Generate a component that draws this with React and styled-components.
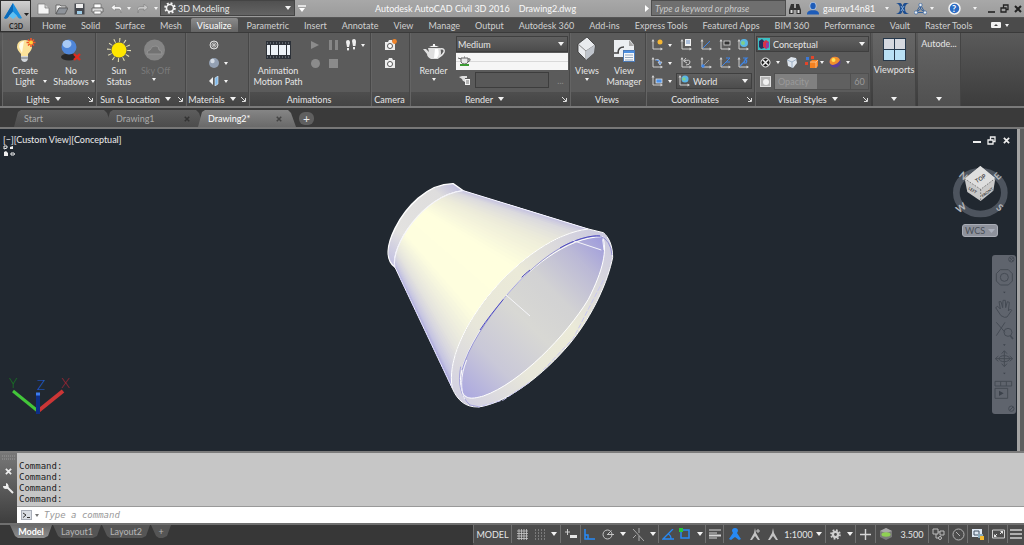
import styled, { createGlobalStyle } from "styled-components"

const ribbonTabs = [
    "Home", "Solid", "Surface", "Mesh", "Visualize", "Parametric", "Insert", "Annotate", "View",
    "Manage", "Output", "Autodesk 360", "Add-ins", "Express Tools", "Featured Apps", "BIM 360",
    "Performance", "Vault", "Raster Tools",
]

export default function App(){
    return(
        <Window>
            <GlobalStyle />
            <Header />
            <Ribbon />
            <DocumentTabs />
            <Viewport />
            <CommandLine />
            <Footer />
        </Window>
    )
}

function Header(){
    return(
        <Top>
            <AppButton aria-label="Application menu">
                <Svg w={29} h={30}>
                    <path d="M12 2 L3 17 Q6 19 8 15 L12 11 L16 15 Q18 19 21 17 Z" fill="#1b8fe0" />
                    <path d="M12 2 L3 17 Q6 19 8 15 L12 10 Z" fill="#0a68b8" />
                    <path d="M8 15 L12 11 L16 15 L12 18 Z" fill="#5cc0f5" />
                    <path d="M23 12h5l-2.500 3z" fill="#222" />
                    <text x="8" y="28" fontSize="7" fontWeight="700" fill="#222">C3D</text>
                </Svg>
            </AppButton>
            <TitleBar>
                <QuickAccess>
                    <Tool $w={18} aria-label="New"><NewIcon /></Tool>
                    <Tool $w={18} aria-label="Open"><OpenIcon /></Tool>
                    <Tool $w={18} aria-label="Save"><SaveIcon /></Tool>
                    <Tool $w={18} aria-label="Plot"><PrintIcon /></Tool>
                    <Tool $w={20} aria-label="Undo"><UndoIcon color="#f4f4f4" /></Tool>
                    <Tool $w={6} aria-label="Undo list"><Caret /></Tool>
                    <Tool $w={20} aria-label="Redo"><UndoIcon color="#c6c6c6" flip /></Tool>
                    <Tool $w={8} aria-label="Redo list"><Caret /></Tool>
                </QuickAccess>
                <Workspace>
                    <GearIcon size={12} color="#f2f2f2" />
                    <select aria-label="Workspace"><option>3D Modeling</option></select>
                    <Caret $big />
                </Workspace>
                <Tool $w={13} aria-label="Customize quick access">
                    <Svg w={8} h={8}><path d="M0 1h8" stroke="#fff" strokeWidth="1.4" /><path d="M1 3h6L4 7z" fill="#fff" /></Svg>
                </Tool>
                <Title>
                    <span>Autodesk AutoCAD Civil 3D 2016</span>
                    <span>Drawing2.dwg</span>
                </Title>
                <Tool $w={8} aria-label="Collapse search">
                    <Svg w={4} h={7}><path d="M0 0l4 3.500-4 3.500z" fill="#fff" /></Svg>
                </Tool>
                <Search type="text" aria-label="Search" placeholder="Type a keyword or phrase" />
                <Tool $w={18} aria-label="Find"><BinocularsIcon /></Tool>
                <User>
                    <Svg w={12} h={13}>
                        <ellipse cx="6" cy="4" rx="3.200" ry="3.800" fill="#1e5cb8" stroke="#dfe8f5" strokeWidth=".6" />
                        <path d="M0 12.500c0-3 2-3.800 4-4.200h4c2 .4 4 1.200 4 4.200z" fill="#1e5cb8" />
                    </Svg>
                    gaurav14n81
                </User>
                <Tool $w={10} aria-label="Account menu"><Caret /></Tool>
                <Tool $w={20} aria-label="Exchange apps">
                    <Svg w={13} h={11}>
                        <path d="M0 0h4q2 0 2.500 4Q7 0 9 0h4q-4 1-4 5.500T13 11H9q-2 0-2.500-4Q6 11 4 11H0q4-1 4-5.500T0 0z" fill="#1d4d8f" />
                        <path d="M5 3l1.500 2.500L5 8M8 3L6.500 5.500 8 8" stroke="#9cc4f0" strokeWidth=".8" fill="none" />
                    </Svg>
                </Tool>
                <Tool $w={16} aria-label="Autodesk 360">
                    <Svg w={13} h={12}>
                        <path d="M6.500 2L2 9.500h9zM6.500 2v4M6.500 6L2 9.500M6.500 6l4.500 3.500" stroke="#35619b" fill="none" />
                        <circle cx="6.500" cy="2" r="1.700" fill="#e9eef5" stroke="#35619b" strokeWidth=".7" />
                        <circle cx="2" cy="9.500" r="1.700" fill="#e9eef5" stroke="#35619b" strokeWidth=".7" />
                        <circle cx="11" cy="9.500" r="1.700" fill="#e9eef5" stroke="#35619b" strokeWidth=".7" />
                    </Svg>
                </Tool>
                <Tool $w={8} aria-label="Autodesk 360 menu"><Caret /></Tool>
                <Tool $w={36} aria-label="Help">
                    <Svg w={13} h={13}>
                        <circle cx="6.500" cy="6.500" r="5.500" fill="#2c6cc4" stroke="#f4f4f4" strokeWidth="1.500" />
                        <text x="4" y="10" fontSize="9" fontWeight="700" fill="#fff">?</text>
                    </Svg>
                </Tool>
                <Tool $w={5} aria-label="Help menu"><Caret /></Tool>
                <WindowButtons>
                    <Tool $w={13} aria-label="Minimize"><Svg w={8} h={9}><path d="M0 8h7" stroke="#222" strokeWidth="1.600" /></Svg></Tool>
                    <Tool $w={13} aria-label="Restore"><RestoreIcon color="#222" /></Tool>
                    <Tool $w={13} aria-label="Close"><CloseIcon color="#222" size={8} /></Tool>
                </WindowButtons>
            </TitleBar>
            <TabBar>
                {ribbonTabs.map((name) => (
                    <RibbonTab key={name} $active={name === "Visualize"}>{name}</RibbonTab>
                ))}
                <Minimizer>
                    <Tool $w={13} aria-label="Minimize ribbon">
                        <Svg w={10} h={6}><rect width="10" height="6" rx="1" fill="#f2f2f2" /><path d="M3 4h4L5 2z" fill="#444" /></Svg>
                    </Tool>
                    <Tool $w={10} aria-label="Ribbon options"><Caret /></Tool>
                </Minimizer>
            </TabBar>
        </Top>
    )
}

function Ribbon(){
    return(
        <RibbonBar>
            <Panel $w={94}>
                <Body>
                    <BigButton $w={44}><BulbIcon />Create<br />Light<SideCaret /></BigButton>
                    <BigButton $w={48}><ShadowIcon />No<br />Shadows<SideCaret /></BigButton>
                </Body>
                <PanelTitle $launcher>Lights<Caret $big /><Launcher /></PanelTitle>
            </Panel>
            <Panel $w={90}>
                <Body>
                    <BigButton $w={44}><SunIcon />Sun<br />Status</BigButton>
                    <BigButton $w={26} disabled><SkyIcon /><Nowrap>Sky Off</Nowrap><Caret /></BigButton>
                </Body>
                <PanelTitle $launcher>Sun &amp; Location<Caret $big /><Launcher /></PanelTitle>
            </Panel>
            <Panel $w={63}>
                <Body $center>
                    <Rows>
                        <Row>
                            <Tool $w={16} aria-label="Materials browser">
                                <Svg w={10} h={10}>
                                    <circle cx="5" cy="5" r="4" stroke="#ddd" fill="#666" />
                                    <path d="M2 2l6 6M8 2L2 8M5 1v8M1 5h8" stroke="#ccc" strokeWidth=".8" />
                                </Svg>
                            </Tool>
                        </Row>
                        <Row>
                            <Tool $w={16} aria-label="Materials and textures">
                                <Svg w={12} h={12}>
                                    <circle cx="6" cy="6" r="5" fill="#93a0b3" />
                                    <circle cx="4.500" cy="4" r="2.200" fill="#d3dae4" />
                                </Svg>
                            </Tool>
                            <Tool $w={8} aria-label="Textures menu"><Caret /></Tool>
                        </Row>
                        <Row>
                            <Tool $w={16} aria-label="Material mapping">
                                <Svg w={12} h={10}>
                                    <path d="M1 5l4-4v8z" fill="#eee" />
                                    <path d="M7 2l3-2v8l-3 2z" fill="#7db8ea" stroke="#e8f2fb" strokeWidth=".6" />
                                </Svg>
                            </Tool>
                            <Tool $w={8} aria-label="Mapping menu"><Caret /></Tool>
                        </Row>
                    </Rows>
                </Body>
                <PanelTitle $launcher>Materials<Caret $big /><Launcher /></PanelTitle>
            </Panel>
            <Panel $w={122}>
                <Body>
                    <BigButton $w={56}><FilmIcon /><Nowrap>Animation</Nowrap><Nowrap>Motion Path</Nowrap></BigButton>
                    <Rows>
                        <Row>
                            <Tool $w={18} aria-label="Play"><Svg w={8} h={8}><path d="M0 0l8 4-8 4z" fill="#8b8b8b" /></Svg></Tool>
                            <Tool $w={18} aria-label="Pause"><Svg w={9} h={10}><path d="M0 0h3v10H0zM6 0h3v10H6z" fill="#868686" /></Svg></Tool>
                            <Tool $w={18} aria-label="Walk">
                                <Svg w={11} h={13}>
                                    <path d="M0 3q0-2 2-2t2 3L3 8H1zM1 9h2v2q-1 1-2 0zM6 2q0-2 2-2t2 3L9.500 7H7zM7 8h2v2q-1 1-2 0z" fill="#eee" />
                                </Svg>
                            </Tool>
                            <Tool $w={6} aria-label="Walk menu"><Caret /></Tool>
                        </Row>
                        <Row>
                            <Tool $w={18} aria-label="Record"><Svg w={9} h={9}><circle cx="4.500" cy="4.500" r="4.500" fill="#8b8b8b" /></Svg></Tool>
                            <Tool $w={18} aria-label="Stop"><Svg w={9} h={9}><rect width="9" height="9" fill="#8b8b8b" /></Svg></Tool>
                        </Row>
                    </Rows>
                </Body>
                <PanelTitle>Animations</PanelTitle>
            </Panel>
            <Panel $w={39}>
                <Body $center>
                    <Rows>
                        <Row><Tool $w={18} aria-label="Create camera"><CameraIcon spark /></Tool></Row>
                        <Row><Tool $w={18} aria-label="Show cameras"><CameraIcon /></Tool></Row>
                    </Rows>
                </Body>
                <PanelTitle>Camera</PanelTitle>
            </Panel>
            <Panel $w={160}>
                <Body>
                    <BigButton $w={45}><TeapotIcon />Render<Caret /></BigButton>
                    <Fields>
                        <Picker>
                            <select aria-label="Render preset"><option>Medium</option></select>
                            <Caret $big />
                        </Picker>
                        <PresetList>
                            <Svg w={13} h={12}>
                                <path d="M3 3h7v4q-1 2-3.500 2T3 7zM3 4L0 3M10 4q3-1 2 1.500L10 7M6 2h1" stroke="#555" fill="#e8e8e8" strokeWidth=".9" />
                                <path d="M2 10h9" stroke="#3d9a35" strokeWidth="2" />
                            </Svg>
                        </PresetList>
                        <Row $gap={4} $indent={2}>
                            <Svg w={13} h={12}>
                                <path d="M4 2h5v2H7v4Q4 7 4 5L1 3z" fill="#ddd" />
                                <rect x="7" y="5" width="5" height="6" fill="#f4f4f4" /><path d="M8 7h3M8 9h3" stroke="#555" strokeWidth=".8" />
                            </Svg>
                            <OutputBox type="text" aria-label="Output file" disabled />
                            <Tool $w={15} disabled aria-label="Browse">...</Tool>
                        </Row>
                    </Fields>
                </Body>
                <PanelTitle $launcher>Render<Caret $big /><Launcher /></PanelTitle>
            </Panel>
            <Panel $w={76}>
                <Body>
                    <BigButton $w={32}><ViewsIcon />Views<Caret /></BigButton>
                    <BigButton $w={42}><ManagerIcon />View<br />Manager</BigButton>
                </Body>
                <PanelTitle>Views</PanelTitle>
            </Panel>
            <Panel $w={109}>
                <Body>
                    <Rows>
                        <Row>
                            <Tool $w={20} aria-label="UCS origin"><UcsIcon><circle cx="9" cy="3" r="2.500" fill="#f7b733" /></UcsIcon></Tool>
                            <Tool $w={6} aria-label="UCS origin menu"><Caret /></Tool>
                        </Row>
                        <Row>
                            <Tool $w={20} aria-label="UCS rotate"><UcsIcon><path d="M4 3q4-2 5 2M7 5h4L9 8z" stroke="#ddd" fill="#4b8ff0" strokeWidth=".7" /></UcsIcon></Tool>
                            <Tool $w={6} aria-label="UCS rotate menu"><Caret /></Tool>
                        </Row>
                        <Row>
                            <Tool $w={20} aria-label="UCS view"><UcsIcon><rect x="5" y="4" width="6" height="4" fill="#4f93e8" stroke="#eee" strokeWidth=".7" /></UcsIcon></Tool>
                            <Tool $w={6} aria-label="UCS view menu"><Caret /></Tool>
                        </Row>
                    </Rows>
                    <Rows>
                        <Row $indent={3}>
                            <Tool $w={20} aria-label="Named UCS"><UcsIcon><rect x="5" y="0" width="6" height="7" fill="#f1f1f1" /><path d="M6 2h4M6 4h4" stroke="#4477bb" strokeWidth=".8" /></UcsIcon></Tool>
                            <Tool $w={20} aria-label="UCS X"><UcsIcon><path d="M3 9l7-7" stroke="#3f86e8" /></UcsIcon></Tool>
                            <Tool $w={18} aria-label="UCS icon properties"><UcsIcon><rect x="5" y="2" width="6" height="4" fill="#333" stroke="#ddd" strokeWidth=".8" /></UcsIcon></Tool>
                            <Tool $w={18} aria-label="UCS world"><UcsIcon><GlobeShape cx={7} cy={4} r={4} /></UcsIcon></Tool>
                        </Row>
                        <Row $indent={3}>
                            <Tool $w={20} aria-label="UCS previous"><UcsIcon><path d="M4 4q6-2 6 1t-4 3M6 1L3.500 4 7 6" stroke="#ccc" fill="none" /></UcsIcon></Tool>
                            <Tool $w={20} aria-label="UCS Y"><UcsIcon><path d="M3 9l6-6" stroke="#999" /><circle cx="3" cy="9" r="1.700" fill="#3f86e8" /></UcsIcon></Tool>
                            <Tool $w={18} aria-label="UCS Z"><UcsIcon><path d="M3 9l6-6M7 1h4L7 5h4" stroke="#3f86e8" fill="none" /></UcsIcon></Tool>
                            <Tool $w={18} aria-label="UCS 3 point"><UcsIcon><path d="M3 9l5-5M6 1h4l-2 2q3 0 1 3H7" stroke="#3f86e8" fill="none" strokeWidth="1.200" /></UcsIcon></Tool>
                        </Row>
                        <Row $indent={3}>
                            <Picker $w={76}>
                                <UcsIcon><GlobeShape cx={7} cy={4} r={3.5} /></UcsIcon>
                                <select aria-label="Coordinate system"><option>World</option></select>
                                <Caret $big />
                            </Picker>
                        </Row>
                    </Rows>
                </Body>
                <PanelTitle $launcher>Coordinates<Launcher /></PanelTitle>
            </Panel>
            <Panel $w={116}>
                <Body>
                    <Fields>
                        <Picker>
                            <Svg w={12} h={12}>
                                <rect width="12" height="12" fill="#3cc0c4" />
                                <path d="M1 3l3-2 2 2v7l-3 1-2-2z" fill="#27325e" /><path d="M5 4l3-2 3 2v5l-3 2-3-2z" fill="#d6334a" />
                                <path d="M8 5l3-1v5l-3 2z" fill="#8e3fa8" />
                            </Svg>
                            <select aria-label="Visual style"><option>Conceptual</option></select>
                            <Caret $big />
                        </Picker>
                        <Row>
                            <Tool $w={18} aria-label="X-ray">
                                <Svg w={11} h={11}><circle cx="5.500" cy="5.500" r="4.500" stroke="#f2f2f2" fill="#222" /><path d="M2.500 2.500l6 6M8.500 2.500l-6 6" stroke="#f2f2f2" strokeWidth="1.500" /></Svg>
                            </Tool>
                            <Tool $w={7} aria-label="X-ray menu"><Caret /></Tool>
                            <Tool $w={22} aria-label="Face style">
                                <Svg w={12} h={11}><path d="M1 3l4-3 5 1 1 5-4 5-5-2z" fill="#dfe6ee" /><path d="M1 3l5 2 5-3M6 5v6" stroke="#8fa5bd" fill="none" strokeWidth=".8" /></Svg>
                            </Tool>
                            <Tool $w={16} aria-label="Edge style">
                                <Svg w={13} h={13}><path d="M1 1h3v3H1z" fill="#3d79d6" /><path d="M6 0h3v3H6zM0 6h3v3H0z" fill="#e2452b" /><path d="M5 6l2-2h6v6l-2 2H5z" fill="#f58220" /><path d="M5 6h6v6M11 6l2-2" stroke="#ffd9ae" fill="none" strokeWidth=".7" /></Svg>
                            </Tool>
                            <Tool $w={6} aria-label="Edge menu"><Caret /></Tool>
                            <Tool $w={20} aria-label="Lighting quality">
                                <Svg w={12} h={12}><circle cx="6" cy="6" r="5.500" fill="#5a3f99" /><path d="M.5 6A5.500 5.500 0 0 1 11 4Q9 8 4 9Q1 9 .5 6z" fill="#f0902c" /><circle cx="4.500" cy="4" r="2" fill="#ffe25a" /></Svg>
                            </Tool>
                            <Tool $w={6} aria-label="Lighting menu"><Caret /></Tool>
                        </Row>
                        <Row>
                            <Tool $w={18} aria-label="Opacity toggle">
                                <Svg w={11} h={11}><rect x=".5" y=".5" width="10" height="10" fill="#b5b5b5" stroke="#ddd" /><circle cx="6" cy="6" r="3" fill="#f2f2f2" /></Svg>
                            </Tool>
                            <Opacity>
                                <label htmlFor="opacity">Opacity</label>
                                <input id="opacity" type="text" defaultValue="60" disabled />
                            </Opacity>
                        </Row>
                    </Fields>
                </Body>
                <PanelTitle $launcher>Visual Styles<Caret $big /><Launcher /></PanelTitle>
            </Panel>
            <SidePanel>
                <Svg w={23} h={23}>
                    <rect width="23" height="23" fill="#26384b" />
                    <path d="M1 1h10v10H1zM12 1h10v10H12z" fill="#d5d9e0" />
                    <path d="M1 12h10v10H1zM12 12h10v10H12z" fill="#b9e0f5" />
                </Svg>
                Viewports
                <Caret $big />
            </SidePanel>
            <SidePanel>
                Autode...
                <Caret $big />
            </SidePanel>
        </RibbonBar>
    )
}

function DocumentTabs(){
    return(
        <DocBar>
            <DocTab>Start</DocTab>
            <DocTab>Drawing1<CloseIcon color="#333" size={6} /></DocTab>
            <DocTab $active>Drawing2*<CloseIcon color="#444" size={6} /></DocTab>
            <AddDoc aria-label="New drawing">+</AddDoc>
        </DocBar>
    )
}

function Viewport(){
    return(
        <Frame>
            <Canvas>
                <Model />
                <ViewLabel>
                    <span>[−][Custom View][Conceptual]</span>
                    <Svg w={14} h={12}>
                        <path d="M1 4V1h3v2zM8 8h3q1 1 0 2H8z" stroke="#eee" fill="none" />
                        <path d="M1 7l2-1 2 2v3H1zM7 2l3-1v3H7z" fill="#eee" />
                    </Svg>
                </ViewLabel>
                <Axes>
                    <Svg w={72} h={45}>
                        <path d="M8 20l26 21" stroke="#43c63a" strokeWidth="3" />
                        <path d="M32 41L58 20" stroke="#cc3636" strokeWidth="4" />
                        <path d="M33 43V23" stroke="#0e2f86" strokeWidth="4" />
                        <path d="M31 23h4" stroke="#3b7cf0" strokeWidth="3" />
                        <AxisName x="4" y="17" fill="#177a22">Y</AxisName>
                        <AxisName x="32" y="19" fill="#1f5fd6">Z</AxisName>
                        <AxisName x="56" y="17" fill="#a52534">X</AxisName>
                    </Svg>
                </Axes>
                <ViewTools>
                    <CanvasButtons>
                        <Tool $w={14} aria-label="Minimize drawing"><Svg w={8} h={8}><path d="M0 6h8" stroke="#eee" strokeWidth="2" /></Svg></Tool>
                        <Tool $w={15} aria-label="Restore drawing"><RestoreIcon color="#eee" /></Tool>
                        <Tool $w={14} aria-label="Close drawing"><CloseIcon color="#eee" size={7} /></Tool>
                    </CanvasButtons>
                    <ViewCube />
                    <Wcs>WCS<Svg w={7} h={5}><path d="M0 1h7L3.500 5z" fill="#a9afbb" /></Svg></Wcs>
                    <NavBar />
                </ViewTools>
            </Canvas>
        </Frame>
    )
}

function CommandLine(){
    return(
        <Command>
            <Grip>
                <Svg w={13} h={5}><path d="M0 1h13M0 4h13" stroke="#999" strokeDasharray="1 1" /></Svg>
                <CloseIcon color="#eee" size={7} />
                <Svg w={11} h={11}>
                    <path d="M4 4l6 6" stroke="#eee" strokeWidth="2" />
                    <path d="M3 0L3 3 0 3Q0 6 3 6 6 6 5.500 2.500 5 0 3 0z" fill="#eee" />
                </Svg>
            </Grip>
            <Log>
                <History>
                    <p>Command:</p>
                    <p>Command:</p>
                    <p>Command:</p>
                    <p>Command:</p>
                </History>
                <Prompt>
                    <Svg w={11} h={10}>
                        <rect x=".5" y=".5" width="10" height="9" fill="#d9dde3" stroke="#a9aeb8" />
                        <path d="M2 3l3 2-3 2.500M6 7.500h3" stroke="#333" fill="none" />
                    </Svg>
                    <Caret $dark />
                    <input type="text" aria-label="Command" placeholder="Type a command" />
                </Prompt>
            </Log>
        </Command>
    )
}

function Footer(){
    return(
        <Bottom>
            <LayoutTabs>
                <LayoutTab $w={42} $active>Model</LayoutTab>
                <LayoutTab $w={48}>Layout1</LayoutTab>
                <LayoutTab $w={48}>Layout2</LayoutTab>
                <LayoutTab $w={20} aria-label="New layout">+</LayoutTab>
            </LayoutTabs>
            <Status>
                <Group><Tool $w={37}>MODEL</Tool></Group>
                <Group>
                    <Tool $w={20} aria-label="Grid"><Svg w={11} h={11}><path d="M2 0v11M4.500 0v11M7 0v11M9.500 0v11M0 2h11M0 4.500h11M0 7h11M0 9.500h11" stroke="#c9c9c9" strokeWidth=".8" /></Svg></Tool>
                    <Tool $w={16} aria-label="Snap"><Svg w={11} h={11}><path d="M0 1h11M0 4h11M0 7h11M0 10h11" stroke="#aaa" strokeDasharray="1 2" /></Svg></Tool>
                    <Tool $w={12} aria-label="Snap menu"><Caret $big /></Tool>
                </Group>
                <Group><Tool $w={19} aria-label="Dynamic input"><Svg w={12} h={10}><path d="M0 3h5M2.500 0v6" stroke="#ccc" /><rect x="5" y="6" width="7" height="3" fill="#e5e5e5" /></Svg></Tool></Group>
                <Group>
                    <Tool $w={17} aria-label="Ortho"><Svg w={11} h={11}><path d="M1 0v10h10M1 6h3v4" stroke="#2789f5" fill="none" strokeWidth="1.500" /></Svg></Tool>
                    <Tool $w={20} aria-label="Polar"><Svg w={12} h={11}><circle cx="5.500" cy="5.500" r="4.500" stroke="#c4c4c4" fill="none" /><path d="M5 5.500h7M5.500 5.500l4-4" stroke="#c4c4c4" /></Svg></Tool>
                    <Tool $w={10} aria-label="Polar menu"><Caret $big /></Tool>
                    <Tool $w={19} aria-label="Isometric"><Svg w={12} h={13}><path d="M1 1l11 12M7 0v5M7 8v5M4 7L1 10" stroke="#aaa" /></Svg></Tool>
                    <Tool $w={11} aria-label="Isometric menu"><Caret $big /></Tool>
                </Group>
                <Group>
                    <Tool $w={17} aria-label="Object snap tracking"><Svg w={12} h={11}><path d="M11 0L1 10h11M6 5q3 1 3 5" stroke="#2789f5" fill="none" strokeWidth="1.300" /></Svg></Tool>
                    <Tool $w={18} aria-label="Object snap"><Svg w={12} h={12}><rect x="2" y="2" width="8" height="8" stroke="#2789f5" fill="none" strokeWidth="1.500" /><rect x="0" y="0" width="4" height="4" fill="#27c738" /></Svg></Tool>
                    <Tool $w={11} aria-label="Object snap menu"><Caret $big /></Tool>
                </Group>
                <Group><Tool $w={17} aria-label="Line weight"><Svg w={12} h={10}><path d="M0 1h12M0 4h8M0 9h8" stroke="#d6d6d6" strokeWidth="1.200" /><path d="M0 6.500h12" stroke="#d6d6d6" strokeWidth="2" /></Svg></Tool></Group>
                <Group>
                    <Tool $w={22} aria-label="Annotation visibility"><ScaleIcon color="#2789f5" big /></Tool>
                    <Tool $w={18} aria-label="Auto scale"><ScaleIcon color="#c4c4c4" spark /></Tool>
                    <Tool $w={17} aria-label="Annotation scale"><ScaleIcon color="#c4c4c4" /></Tool>
                    <Tool $w={44}>1:1000<Caret $big /></Tool>
                </Group>
                <Group>
                    <Tool $w={18} aria-label="Workspace switching"><GearIcon size={11} color="#cfcfcf" solid /></Tool>
                    <Tool $w={11} aria-label="Workspace menu"><Caret $big /></Tool>
                </Group>
                <Group><Tool $w={19} aria-label="Annotation monitor"><Svg w={11} h={11}><path d="M0 5.500h11M5.500 0v11" stroke="#d6d6d6" strokeWidth="1.400" /></Svg></Tool></Group>
                <Group>
                    <Tool $w={20} aria-label="Survey">
                        <Svg w={12} h={12}><path d="M6 0l6 3v6l-6 3-6-3V3z" fill="#7b7b7b" /><path d="M6 0l6 3-6 2-6-2z" fill="#a9a9a9" /><ellipse cx="6" cy="6.500" rx="4.500" ry="2.200" fill="#8fd053" /></Svg>
                    </Tool>
                    <Tool $w={32}>3.500</Tool>
                </Group>
                <Group><Tool $w={19} aria-label="Isolate objects"><Svg w={13} h={12}><path d="M1 1h5v5H1zM8 3h4v4H8zM6 4h2M4 6v4h3" stroke="#bdbdbd" fill="none" /><circle cx="8" cy="10" r="1.500" stroke="#bdbdbd" fill="none" /></Svg></Tool></Group>
                <Group><Tool $w={18} aria-label="Hardware acceleration"><Svg w={13} h={13}><circle cx="6.500" cy="6.500" r="5.500" stroke="#b3b3b3" fill="none" /><path d="M4 4l4 4" stroke="#b3b3b3" /></Svg></Tool></Group>
                <Group><Tool $w={20} aria-label="Lock interface"><Svg w={12} h={12}><path d="M0 1h10v8H0z" fill="#dfe9f5" /><path d="M2 3h5v4H2z" stroke="#456" fill="none" /><path d="M6 6h5v4H6z" fill="#8ab" /><path d="M8 8h4v4H8z" fill="#f4b92e" /></Svg></Tool></Group>
                <Group><Tool $w={18} aria-label="Clean screen"><Svg w={13} h={10}><path d="M.5 1h12v8H.5z" stroke="#cfcfcf" fill="none" /><path d="M2 8V5l3 3zM11 2v3L8 2z" fill="#e5e5e5" /><path d="M3 7l2-2M10 3L8 5" stroke="#e5e5e5" /></Svg></Tool></Group>
                <Group><Tool $w={16} aria-label="Customization"><Svg w={12} h={10}><path d="M0 1h12M0 5h12M0 9h12" stroke="#cfcfcf" strokeWidth="1.500" /></Svg></Tool></Group>
            </Status>
        </Bottom>
    )
}

function Svg({ w, h, children, box }){
    return <svg width={w} height={h} viewBox={box || `0 0 ${w} ${h}`} aria-hidden="true">{children}</svg>
}

function SideCaret(){
    return <Side><Caret /></Side>
}

function Launcher(){
    return(
        <Corner aria-label="Open settings">
            <Svg w={5} h={5}><path d="M0 0l4 4M4.500 1v3.500H1" stroke="#ddd" fill="none" /></Svg>
        </Corner>
    )
}

function CloseIcon({ color, size }){
    return <Svg w={size} h={size} box="0 0 8 8"><path d="M1 1l6 6M7 1L1 7" stroke={color} strokeWidth="2" /></Svg>
}

function RestoreIcon({ color }){
    return <Svg w={9} h={9}><path d="M1 4h5v4H1zM3.500 3.500V1H8v4.500H6.500" stroke={color} fill="none" strokeWidth="1.300" /></Svg>
}

function GearIcon({ size, color, solid }){
    return(
        <Svg w={size} h={size} box="0 0 12 12">
            <circle cx="6" cy="6" r="4.800" stroke={color} strokeWidth="2" strokeDasharray="1.900 1.870" fill="none" />
            <circle cx="6" cy="6" r={solid ? 2.8 : 3.5} stroke={color} strokeWidth={solid ? 2.5 : 1.6} fill="none" />
        </Svg>
    )
}

function NewIcon(){
    return <Svg w={13} h={12}><path d="M1 1h7l4 4v6H1z" fill="#f5f5f5" stroke="#777" strokeWidth=".7" /><path d="M8 1v4h4" stroke="#777" fill="#ccc" strokeWidth=".7" /></Svg>
}

function OpenIcon(){
    return <Svg w={13} h={12}><path d="M1 2h4l1 1h5v2H4l-3 6z" fill="#eee" stroke="#555" strokeWidth=".8" /><path d="M1 11l3-6h9l-3 6z" fill="#8d9299" stroke="#555" strokeWidth=".8" /></Svg>
}

function SaveIcon(){
    return <Svg w={11} h={12}><path d="M.5.5h10v11H.5z" fill="#45484e" /><path d="M2 1h7v4H2z" fill="#eee" /><path d="M3 8h5v3H3z" fill="#9ccbe6" /></Svg>
}

function PrintIcon(){
    return <Svg w={13} h={12}><path d="M3 1h7v4H3z" fill="#fff" stroke="#666" strokeWidth=".7" /><path d="M1 5h11v4H1z" fill="#d9d9d9" stroke="#555" strokeWidth=".7" /><path d="M3 8h7v3H3z" fill="#fff" stroke="#666" strokeWidth=".7" /></Svg>
}

function UndoIcon({ color, flip }){
    return(
        <Svg w={11} h={10}>
            <path d={flip ? "M7 0l4 3.500L7 7V5H3q-2 0-2 4Q-1 3 3 2.500h4z" : "M4 0L0 3.500 4 7V5h4q2 0 2 4 2-6-2-6.500H4z"} fill={color} stroke="#777" strokeWidth=".5" />
        </Svg>
    )
}

function BinocularsIcon(){
    return <Svg w={12} h={12}><path d="M2 1h3v4h2V1h3l2 6v4H7.500V7h-3v4H0V7z" fill="#333" /><path d="M1.500 7h2v3h-2zM8.500 7h2v3h-2z" fill="#ddd" /></Svg>
}

function BulbIcon(){
    return(
        <Svg w={27} h={27}>
            <path d="M13 4q-8 0-8 7 0 3 4 7v3h7v-3q4-4 4-7 0-7-7-7z" fill="#fbe29a" />
            <path d="M12 5q-5 1-5 6l3 6z" fill="#fffbe6" />
            <path d="M9 20h7v3q-1 3-3.500 3T9 23z" fill="#d2d6da" /><path d="M9 22h7" stroke="#6d7278" />
            <path d="M19 2v9M14.500 6.500h9M16 3.500l6 6M22 3.500l-6 6" stroke="#f0582a" strokeWidth="1.600" /><circle cx="19" cy="6.500" r="2" fill="#ffd23c" />
        </Svg>
    )
}

function ShadowIcon(){
    return(
        <Svg w={27} h={27}>
            <ellipse cx="11" cy="21" rx="8" ry="3.500" fill="#292929" />
            <circle cx="11" cy="11" r="7.500" fill="#4f86d8" /><ellipse cx="9" cy="8" rx="4.500" ry="4" fill="#a9cbf6" />
            <path d="M16 18l6 6M22 18l-6 6" stroke="#e02b1d" strokeWidth="2.400" />
        </Svg>
    )
}

function SunIcon(){
    return(
        <Svg w={27} h={27}>
            <circle cx="13" cy="14" r="10" stroke="#e6e0b4" fill="none" strokeWidth="4" strokeDasharray="1 4.236" />
            <circle cx="13" cy="14" r="7.500" fill="#ffe600" />
        </Svg>
    )
}

function SkyIcon(){
    return(
        <Svg w={27} h={27}>
            <circle cx="13.500" cy="14" r="10.500" fill="#858585" />
            <path d="M6 18q0-4 3-4 2-5 6-4 3 0 3 4 3 0 3 4z" fill="#727272" stroke="#999" strokeWidth=".8" />
        </Svg>
    )
}

function FilmIcon(){
    return(
        <Svg w={27} h={27}>
            <path d="M1 5h25v18H1z" fill="#2c3138" />
            <path d="M2 7h23M2 21h23" stroke="#8f979f" strokeWidth="1.200" strokeDasharray="1 2" />
            <path d="M2 9h3v10H2zM6 9h7v10H6zM14 9h7v10h-7zM22 9h3v10h-3z" fill="#edf2f7" />
        </Svg>
    )
}

function CameraIcon({ spark }){
    return(
        <Svg w={13} h={12}>
            <path d="M1 3h3l1-2h3l1 2h2v8H1z" fill="#ececec" />
            <circle cx="6" cy="7" r="2.500" fill="#fff" stroke="#555" />
            {spark && <circle cx="10.500" cy="2.500" r="2.400" fill="#f0852b" />}
        </Svg>
    )
}

function TeapotIcon(){
    return(
        <Svg w={22} h={27}>
            <path d="M5 12h12q3 7-2 11H8Q4 21 4 18L0 13l3 0 3 3z" fill="#dfdfdf" />
            <path d="M17 13q5-1 4 3-1 3-5 5" stroke="#e8e8e8" fill="none" strokeWidth="1.500" />
            <path d="M6 11q5-3 10 0zM10 8h2v2h-2z" fill="#f4f4f4" />
            <path d="M12 13h3q2 5-1 9h-3z" fill="#fff" />
        </Svg>
    )
}

function ViewsIcon(){
    return(
        <Svg w={20} h={27}>
            <path d="M10 1l8 8-1 8-8 7-8-8V8z" fill="#e9ebee" stroke="#333" strokeWidth=".8" />
            <path d="M1 8l8 7 9-6M9 15v9" stroke="#888" fill="none" />
            <path d="M9 15l9-6-1 8-8 7z" fill="#bfc4cb" />
        </Svg>
    )
}

function ManagerIcon(){
    return(
        <Svg w={22} h={27}>
            <path d="M1 4h16l4 5v12H1z" fill="#eceff2" />
            <path d="M16 4v6h5z" fill="#aaa" />
            <path d="M1 17h5M5 17q0-6 6-6" stroke="#444" fill="none" strokeWidth="1.500" />
            <rect x="10.500" y="14.500" width="11" height="11" fill="#f6f8fa" stroke="#4c79b5" />
            <path d="M11 16h10" stroke="#4c8fe0" strokeWidth="2" /><path d="M12 19h8M12 21.500h8M12 24h8" stroke="#7d93ad" strokeWidth=".8" />
        </Svg>
    )
}

function UcsIcon({ children }){
    return <Svg w={12} h={12}><path d="M2 1v9h9" stroke="#cfcfcf" fill="none" /><path d="M.5 2.500L2 0l1.500 2.500zM9.500 8.500L12 10l-2.500 1.500z" fill="#cfcfcf" />{children}</Svg>
}

function GlobeShape({ cx, cy, r }){
    return <><circle cx={cx} cy={cy} r={r} fill="#5ab6e8" /><circle cx={cx - 1} cy={cy} r={r / 2} fill="#7fcf8b" /></>
}

function ScaleIcon({ color, big, spark }){
    return(
        <Svg w={12} h={12}>
            <path d={big ? "M6 0q3 0 3 3L8 5l4 6-2 1-4-3-4 3-2-1 4-6-1-2q0-3 3-3z" : "M6 0l1 5 4 7H9L6 8l-3 4H1l4-7z"} fill={color} />
            {spark && <path d="M9 1v4M7 3h4" stroke={color} />}
        </Svg>
    )
}

// The cone is shaded in strips that run from the small rim to the large one.
// Each strip reaches under the next ones, so that no seam shows between them.
const smallRim = [[75, 292], [60, 230], [160, 75], [280, 62]]
const largeRim = [[247, 655], [215, 495], [460, 200], [655, 177]]
const shades = [
    [0, [168, 165, 218]], [.06, [196, 195, 226]], [.2, [228, 227, 222]], [.38, [254, 254, 222]],
    [.62, [255, 255, 222]], [.8, [236, 235, 218]], [.92, [218, 217, 222]], [1, [190, 188, 224]],
]
const stripCount = 60

function curve(points, t){
    const u = 1 - t
    return [0, 1].map((i) =>
        u * u * u * points[0][i] + 3 * u * u * t * points[1][i] + 3 * u * t * t * points[2][i] + t * t * t * points[3][i]
    )
}

function shade(t){
    const next = shades.findIndex((s) => s[0] >= t)
    if (next < 1) return `rgb(${shades[0][1]})`
    const [t0, a] = shades[next - 1]
    const [t1, b] = shades[next]
    return `rgb(${a.map((v, i) => Math.round(v + (b[i] - v) * (t - t0) / (t1 - t0)))})`
}

const strips = Array.from({ length: stripCount }, (_, i) => {
    const from = i / stripCount
    const ends = [1, 2, 3, 4].map((n) => Math.min(1, (i + n) / stripCount))
    const corners = [
        curve(smallRim, from), curve(largeRim, from),
        ...ends.map((t) => curve(largeRim, t)),
        ...ends.map((t) => curve(smallRim, t)).reverse(),
    ]
    return { points: corners.join(" "), color: shade(from) }
})

function Model(){
    return(
        <Stage>
            <Svg w={260} h={250} box="0 0 780 750">
                <defs>
                    <linearGradient id="collar" gradientUnits="userSpaceOnUse" x1="60" y1="290" x2="270" y2="40">
                        <stop offset="0" stopColor="#bfbde2" />
                        <stop offset=".3" stopColor="#e3e2e0" />
                        <stop offset=".8" stopColor="#dedddd" />
                        <stop offset="1" stopColor="#b9b7de" />
                    </linearGradient>
                    <linearGradient id="rim" gradientUnits="userSpaceOnUse" x1="250" y1="680" x2="720" y2="200">
                        <stop offset="0" stopColor="#d2d0e2" />
                        <stop offset=".3" stopColor="#e8e7da" />
                        <stop offset=".6" stopColor="#ebead8" />
                        <stop offset="1" stopColor="#cbc9e0" />
                    </linearGradient>
                    <linearGradient id="hole" gradientUnits="userSpaceOnUse" x1="270" y1="650" x2="700" y2="210">
                        <stop offset="0" stopColor="#aeabdf" />
                        <stop offset=".2" stopColor="#c9c8d8" />
                        <stop offset=".45" stopColor="#d8d8d4" />
                        <stop offset=".65" stopColor="#d2d2d3" />
                        <stop offset=".85" stopColor="#bbb9d6" />
                        <stop offset="1" stopColor="#9f9cdc" />
                    </linearGradient>
                </defs>
                <path d="M75 292C45 270 50 225 75 175C105 115 170 40 250 41L280 62C160 75 60 230 75 292Z" fill="url(#collar)" stroke="#fff" strokeWidth="4" />
                {strips.map((s) => <polygon key={s.points} points={s.points} fill={s.color} />)}
                <path d="M75 292C60 230 160 75 280 62L655 177M75 292L247 655" stroke="#f6f6ff" strokeWidth="3" fill="none" />
                <path d="M247 655C215 495 460 200 655 177L700 188C715 200 728 225 728 262C715 330 670 435 600 520C520 615 410 700 325 711C285 712 262 690 247 655Z" fill="url(#rim)" stroke="#fff" strokeWidth="3" />
                <path d="M274 660C255 590 330 470 400 388C470 300 590 200 698 200C712 240 700 300 655 388C590 495 450 640 340 678C310 686 285 692 274 660Z" fill="url(#hole)" stroke="#fff" strokeWidth="3" />
                <path d="M276 600C295 530 350 450 400 388C480 290 590 196 690 198Q722 210 726 255" stroke="#7471cc" strokeWidth="2" fill="none" />
                <path d="M330 480C350 450 375 418 400 388M455 322C465 312 470 308 480 300M570 234C610 210 665 194 690 198" stroke="#4d4ac0" strokeWidth="3" fill="none" />
                <path d="M272 590C262 640 272 680 300 705L330 711" stroke="#8e8bd8" strokeWidth="2" fill="none" />
                <path d="M698 208L702 240M408 375L480 438M610 212L694 240M290 570C270 620 272 660 284 688" stroke="#f6f6fa" strokeWidth="3" fill="none" />
                <path d="M90 322L245 650M700 330L610 505L520 600M480 636L400 690L325 711" stroke="#c9c7f2" strokeWidth="3" fill="none" strokeDasharray="16 5" />
            </Svg>
        </Stage>
    )
}

function ViewCube(){
    return(
        <CubeWrap>
            <Svg w={57} h={54} box="66 105 171 162">
                <ellipse cx="151" cy="188" rx="72" ry="64" stroke="#4d545e" strokeWidth="20" fill="none" />
                <path d="M151 108L196 145L190 182L152 213L112 186L104 146Z" fill="#c9c9c9" />
                <path d="M151 108L196 145L152 178L104 146Z" fill="#dedede" />
                <path d="M104 146L152 178L196 145M152 178V213" stroke="#555" strokeWidth="2" strokeDasharray="5 4" fill="none" />
                <CubeText x="135" y="152" fontSize="17" transform="rotate(-32 151 146)">TOP</CubeText>
                <CubeText x="113" y="184" fontSize="12" transform="rotate(32 125 182)">LEFT</CubeText>
                <CubeText x="153" y="193" fontSize="12" transform="rotate(-36 170 190)">FRONT</CubeText>
                <Compass x="88" y="148" transform="rotate(40 100 138)">N</Compass>
                <Compass x="194" y="148" transform="rotate(-45 203 138)">E</Compass>
                <Compass x="78" y="244" transform="rotate(-35 92 234)">W</Compass>
                <Compass x="201" y="244" transform="rotate(40 210 234)">S</Compass>
            </Svg>
        </CubeWrap>
    )
}

function NavBar(){
    return(
        <Nav>
            <Svg w={24} h={159} box="185 378 72 477">
                <g stroke="#454b54" strokeWidth="3" fill="none">
                    <circle cx="243" cy="391" r="8" /><path d="M238 386l10 10M248 386l-10 10" />
                    <path d="M210 422h24l12 12v22l-12 12h-24l-12-12v-22z" /><circle cx="222" cy="445" r="12" />
                    <path d="M212 560q-8-12-16-24l6-4 8 8-4-22h6l5 18 1-22h7l1 22 5-18 6 2-3 26 6-6 4 4-14 20q-6 4-18-4z" />
                    <path d="M198 580l26 30M224 580l-26 40" /><circle cx="233" cy="610" r="12" /><path d="M240 620l8 10" strokeWidth="5" />
                    <path d="M222 666v46M196 689h50M214 674l8-9 8 9M214 704l8 9 8-9M204 681l-9 8 9 8M238 681l9 8-9 8" /><ellipse cx="222" cy="689" rx="16" ry="9" />
                    <path d="M194 757h50v14h-50zM211 757v14M228 757v14M194 778h38v30h-38z" />
                    <circle cx="243" cy="839" r="8" /><path d="M238 844l10-10" />
                </g>
                <path d="M206 785l14 8-14 8zM218 488h8l-4 5zM218 646h8l-4 5zM218 731h8l-4 5z" fill="#3c424b" />
            </Svg>
        </Nav>
    )
}



const GlobalStyle = createGlobalStyle`
    *{
        box-sizing:border-box;
    }
    body{
        margin:0;
        background-color:#3a3a3a;
        color:#E6E6E6;
        font-family:Lato, "Open Sans", sans-serif;
        font-size:9px;
        line-height:11px;
    }
    button, input, select{
        font:inherit;
        color:inherit;
        margin:0;
        padding:0;
        border:none;
        background:none;
        outline:none;
    }
    select{
        appearance:none;
        flex:1;
        min-width:0;
    }
    option{
        color:#222222;
    }
    p{
        margin:0;
    }
    svg{
        display:block;
        flex-shrink:0;
    }
`
const Window = styled.div`
    min-height:100vh;
    display:flex;
    flex-direction:column;
    overflow:hidden;
`
const Caret = styled.i`
    width:0;
    height:0;
    flex-shrink:0;
    border:solid transparent;
    border-width:${(p) => (p.$big ? "4px 3px 0" : "3px 2px 0")};
    border-top-color:${(p) => (p.$dark ? "#777777" : "#F2F2F2")};
`
const Tool = styled.button`
    width:${(p) => p.$w}px;
    display:flex;
    flex-shrink:0;
    justify-content:center;
    align-items:center;
    gap:3px;
    &:disabled{
        color:#8C8C8C;
    }
`
const Top = styled.header`
    display:grid;
    grid-template-columns:31px 1fr;
    grid-template-rows:18px 15px;
    background-color:#4B4B4B;
`
const AppButton = styled.button`
    grid-row:1 / 3;
    height:32px;
    background:linear-gradient(#D0D0D0, #8A8A8A);
    border:1px solid #2F2F2F;
    overflow:hidden;
`
const TitleBar = styled.div`
    display:flex;
    align-items:stretch;
    background:linear-gradient(#A8A8A8, #9B9B9B);
    border-bottom:1px solid #555555;
`
const QuickAccess = styled.div`
    display:flex;
    padding-left:3px;
`
const Workspace = styled.div`
    width:135px;
    display:flex;
    align-items:center;
    gap:2px;
    padding:0 3px;
    margin-bottom:1px;
    background:linear-gradient(#505050, #646464);
    border:1px solid #444444;
    select{
        font-size:9px;
    }
`
const Title = styled.div`
    flex:1;
    display:flex;
    justify-content:center;
    align-items:center;
    gap:9px;
    color:#FAFAFA;
`
const Search = styled.input`
    width:135px;
    padding:0 3px;
    background-color:#6F6F6F;
    border:1px solid #4D4D4D;
    margin-bottom:1px;
    &::placeholder{
        color:#C9C9C9;
        font-style:italic;
    }
`
const User = styled.div`
    display:flex;
    align-items:center;
    gap:4px;
    padding-left:3px;
    width:78px;
    color:#FAFAFA;
`
const WindowButtons = styled.div`
    display:flex;
    padding-left:8px;
`
const TabBar = styled.nav`
    display:flex;
    align-items:stretch;
    gap:3px;
    padding-left:5px;
    border-bottom:1px solid #3A3A3A;
`
const RibbonTab = styled.button`
    padding:0 6px;
    white-space:nowrap;
    color:${(p) => (p.$active ? "#FFFFFF" : "#D0D0D0")};
    background:${(p) => (p.$active ? "linear-gradient(#8B8B8B, #646464)" : "none")};
    border-radius:2px 2px 0 0;
`
const Minimizer = styled.div`
    display:flex;
    margin-left:8px;
`
const RibbonBar = styled.div`
    display:flex;
    padding-left:2px;
    background:linear-gradient(#5A5A5A, #3C3C3C);
    border-bottom:2px solid #7A7A7A;
`
const Panel = styled.section`
    width:${(p) => p.$w}px;
    flex-shrink:0;
    display:flex;
    flex-direction:column;
    background-color:#5B5B5B;
    border-right:1px solid #474747;
    border-left:1px solid #646464;
`
const Body = styled.div`
    height:59px;
    display:flex;
    justify-content:${(p) => (p.$center ? "center" : "flex-start")};
    padding-top:3px;
`
const BigButton = styled.button`
    width:${(p) => p.$w}px;
    flex-shrink:0;
    display:block;
    position:relative;
    text-align:center;
    align-self:flex-start;
    svg, ${Caret}{
        display:block;
        margin:0 auto 2px;
    }
    ${Caret}{
        margin:2px auto 0;
    }
    &:disabled{
        color:#7A7A7A;
    }
`
const Side = styled.span`
    position:absolute;
    right:0;
    bottom:4px;
`
const Nowrap = styled.span`
    display:block;
    white-space:nowrap;
`
const PanelTitle = styled.div`
    height:14px;
    display:flex;
    justify-content:center;
    align-items:center;
    gap:5px;
    position:relative;
    padding-right:${(p) => (p.$launcher ? 11 : 2)}px;
    background:linear-gradient(#4E4E4E, #444444);
`
const Corner = styled.button`
    position:absolute;
    right:2px;
    bottom:4px;
`
const Rows = styled.div`
    display:flex;
    flex-direction:column;
`
const Row = styled.div`
    height:18px;
    display:flex;
    align-items:center;
    gap:${(p) => p.$gap || 0}px;
    padding-left:${(p) => p.$indent || 0}px;
`
const Fields = styled.div`
    flex:1;
    min-width:0;
    display:flex;
    flex-direction:column;
    gap:1px;
    padding-right:1px;
`
const Picker = styled.div`
    width:${(p) => (p.$w ? p.$w + "px" : "auto")};
    height:16px;
    flex-shrink:0;
    display:flex;
    align-items:center;
    gap:3px;
    padding:0 3px 0 1px;
    background:linear-gradient(#606060, #4C4C4C);
    border:1px solid #3F3F3F;
    select{
        font-size:9px;
    }
`
const PresetList = styled.div`
    height:17px;
    padding:2px;
    background:linear-gradient(#F6F6F6 49%, #D9D9D9 50%, #F6F6F6 55%);
`
const OutputBox = styled.input`
    flex:1;
    min-width:0;
    height:16px;
    background-color:#585858;
    border:1px solid #3D3D3D;
`
const Opacity = styled.div`
    flex:1;
    display:flex;
    justify-content:space-between;
    color:#9A9A9A;
    background-color:#606060;
    border:1px solid #505050;
    label{
        width:42px;
        padding:2px 3px;
        background-color:#808080;
    }
    input{
        width:18px;
        text-align:center;
        border-left:1px solid #505050;
    }
`
const SidePanel = styled.button`
    width:43px;
    flex-shrink:0;
    display:flex;
    flex-direction:column;
    align-items:center;
    gap:3px;
    margin-left:2px;
    padding:5px 0;
    background:linear-gradient(#666666, #505050);
    border-right:1px solid #444444;
    ${Caret}{
        margin-top:auto;
    }
`
const DocBar = styled.nav`
    height:21px;
    display:flex;
    align-items:flex-end;
    padding-left:14px;
    background-color:#3A3A3A;
    border-bottom:2px solid #777777;
`
const DocTab = styled.button`
    width:98px;
    height:17px;
    display:flex;
    justify-content:space-between;
    align-items:center;
    padding:0 14px 0 10px;
    margin-right:-6px;
    color:${(p) => (p.$active ? "#FFFFFF" : "#ABABAB")};
    background:${(p) => (p.$active ? "linear-gradient(#858585, #6A6A6A)" : "linear-gradient(#5D5D5D, #4C4C4C)")};
    clip-path:polygon(0 100%, 4px 2px, 7px 0, 90px 0, 93px 3px, 98px 100%);
`
const AddDoc = styled.button`
    width:15px;
    height:13px;
    margin:0 0 2px 9px;
    border-radius:6px;
    background-color:#5F5F5F;
    font-size:12px;
`
const Frame = styled.main`
    flex:1;
    display:flex;
    min-height:290px;
    padding-right:4px;
    background-color:#5E5E5E;
`
const Canvas = styled.div`
    flex:1;
    position:relative;
    background-color:#212830;
    border-right:3px solid #A3A3A3;
`
const Stage = styled.div`
    height:100%;
    display:flex;
    justify-content:center;
    align-items:center;
    padding:10px 17px 0 0;
`
const ViewLabel = styled.div`
    position:absolute;
    left:3px;
    top:5px;
    color:#EDEDED;
`
const Axes = styled.div`
    position:absolute;
    left:5px;
    bottom:35px;
`
const AxisName = styled.text`
    font-family:Lato, sans-serif;
    font-weight:300;
    font-size:14px;
`
const ViewTools = styled.div`
    position:absolute;
    top:5px;
    right:1px;
    display:flex;
    flex-direction:column;
    align-items:flex-end;
`
const CanvasButtons = styled.div`
    display:flex;
    padding-right:3px;
    height:12px;
`
const CubeWrap = styled.div`
    padding:19px 7px 5px 0;
`
const CubeText = styled.text`
    font-weight:700;
    fill:#444444;
`
const Compass = styled.text`
    font-size:29px;
    font-weight:700;
    fill:#B4B6B9;
`
const Wcs = styled.button`
    width:36px;
    height:13px;
    display:flex;
    justify-content:center;
    align-items:center;
    gap:3px;
    margin:0 18px 18px 0;
    color:#4A5058;
    background-color:#8E929C;
    border:1px solid #A9ADB6;
    border-radius:3px;
`
const Nav = styled.div`
    background-color:#5F646D;
    border-radius:3px;
`
const Command = styled.section`
    display:flex;
    border-top:2px solid #7B7B7B;
`
const Grip = styled.div`
    width:17px;
    display:flex;
    flex-direction:column;
    align-items:center;
    gap:8px;
    padding-top:2px;
    background:linear-gradient(#777777, #3E3E3E);
`
const Log = styled.div`
    flex:1;
    font-family:"DejaVu Sans Mono", monospace;
    color:#222222;
`
const History = styled.div`
    padding:8px 2px 1px;
    background-color:#C6C6C6;
    border-bottom:1px solid #999999;
`
const Prompt = styled.div`
    height:16px;
    display:flex;
    align-items:center;
    gap:3px;
    padding-left:4px;
    background-color:#FFFFFF;
    input{
        flex:1;
        padding-left:2px;
        font-style:italic;
    }
    input::placeholder{
        color:#9A9A9A;
    }
`
const Bottom = styled.footer`
    display:flex;
    justify-content:space-between;
    height:22px;
    background-color:#373737;
    border-top:2px solid #6F6F6F;
`
const LayoutTabs = styled.nav`
    display:flex;
    padding-left:10px;
`
const LayoutTab = styled.button`
    width:${(p) => p.$w}px;
    height:13px;
    margin-right:1px;
    color:${(p) => (p.$active ? "#FFFFFF" : "#B5B5B5")};
    font-weight:${(p) => (p.$active ? 700 : 400)};
    background:${(p) => (p.$active ? "linear-gradient(#6A6A6A, #8F8F8F)" : "#555555")};
    clip-path:polygon(0 0, 5px 85%, 8px 100%, calc(100% - 8px) 100%, calc(100% - 4px) 85%, 100% 0);
`
const Status = styled.div`
    display:flex;
    padding-bottom:2px;
    background-color:#4C4C4C;
`
const Group = styled.div`
    display:flex;
    border-left:1px solid #707070;
`
